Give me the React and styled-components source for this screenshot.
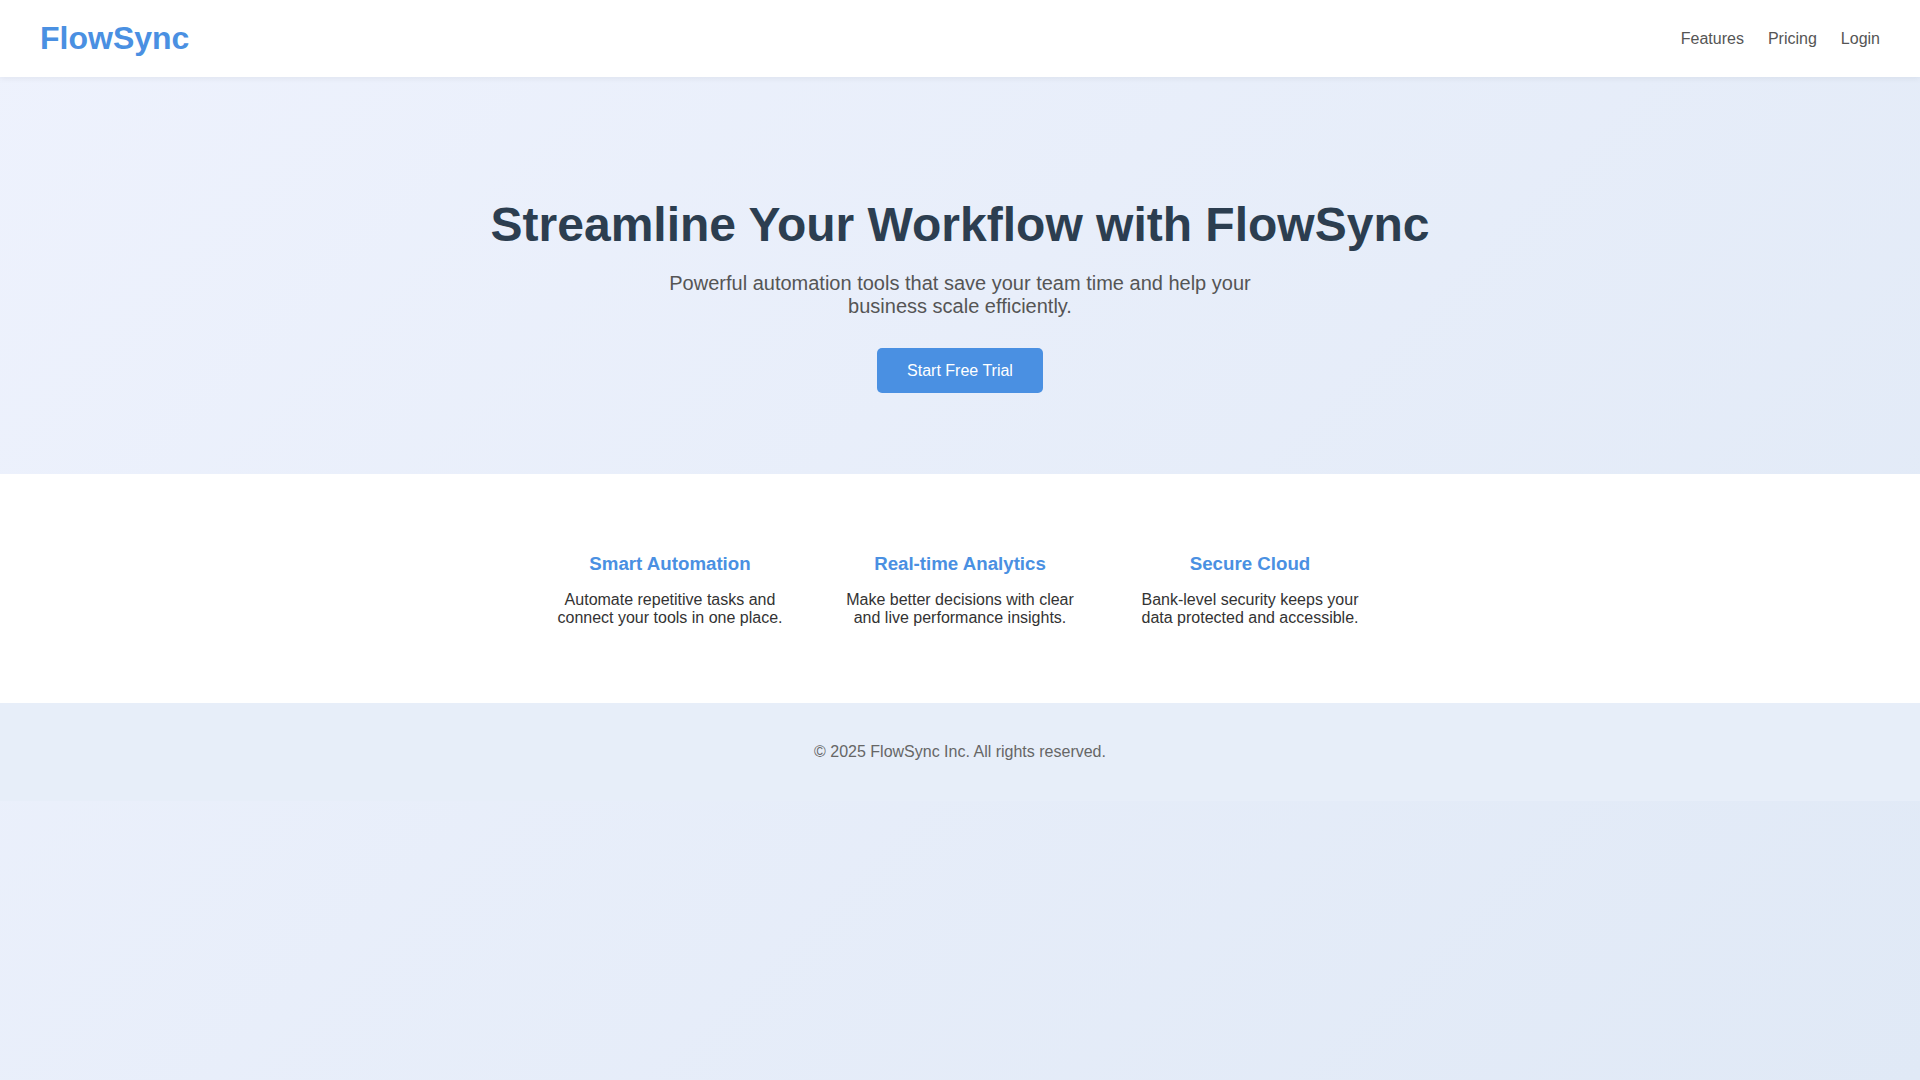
import React from "react";
import styled, { createGlobalStyle } from "styled-components";

const GlobalStyle = createGlobalStyle`
  * { box-sizing: border-box; }
  html, body { margin: 0; padding: 0; }
  body {
    min-height: 100vh;
    font-family: "Liberation Sans", Arial, sans-serif;
    background: linear-gradient(135deg, #eef2fd 0%, #e0e9f6 100%);
    color: #333;
  }
`;

const Header = styled.header`
  display: flex;
  align-items: center;
  justify-content: space-between;
  padding: 20px 40px;
  background: #ffffff;
  box-shadow: 0 2px 6px rgba(0, 0, 0, 0.05);
  position: relative;
  z-index: 1;
`;

const Logo = styled.div`
  font-size: 32px;
  font-weight: 700;
  color: #4a90e2;
`;

const Nav = styled.nav`
  display: flex;
  gap: 24px;
`;

const NavLink = styled.a`
  font-size: 16px;
  color: #555;
  text-decoration: none;
  cursor: pointer;
`;

const Hero = styled.section`
  display: flex;
  flex-direction: column;
  align-items: center;
  text-align: center;
  padding: 120px 32px 81px;
`;

const Title = styled.h1`
  margin: 0 0 20px;
  font-size: 48px;
  font-weight: 700;
  color: #2c3e50;
`;

const Subtitle = styled.p`
  margin: 0 0 30px;
  max-width: 600px;
  font-size: 20px;
  color: #555;
`;

const CTA = styled.button`
  font-family: inherit;
  font-size: 16px;
  line-height: 19px;
  color: #fff;
  background: #4a90e2;
  border: none;
  border-radius: 5px;
  padding: 13px 30px;
  cursor: pointer;
`;

const Features = styled.section`
  background: #ffffff;
  padding: 79px 32px 76px;
  display: grid;
  grid-template-columns: repeat(3, 250px);
  justify-content: center;
  column-gap: 40px;
`;

const Feature = styled.div`
  text-align: center;
`;

const FeatureTitle = styled.h3`
  margin: 0 0 16px;
  font-size: 18.7px;
  font-weight: 700;
  color: #4a90e2;
`;

const FeatureText = styled.p`
  margin: 0;
  font-size: 16px;
  color: #333;
`;

const Footer = styled.footer`
  background: #e7eef9;
  padding: 40px 32px;
  text-align: center;
  font-size: 16px;
  color: #666;
`;

const features = [
  {
    title: "Smart Automation",
    text: "Automate repetitive tasks and connect your tools in one place.",
  },
  {
    title: "Real-time Analytics",
    text: "Make better decisions with clear and live performance insights.",
  },
  {
    title: "Secure Cloud",
    text: "Bank-level security keeps your data protected and accessible.",
  },
];

export default function App() {
  return (
    <>
      <GlobalStyle />
      <Header>
        <Logo>FlowSync</Logo>
        <Nav>
          <NavLink>Features</NavLink>
          <NavLink>Pricing</NavLink>
          <NavLink>Login</NavLink>
        </Nav>
      </Header>
      <Hero>
        <Title>Streamline Your Workflow with FlowSync</Title>
        <Subtitle>
          Powerful automation tools that save your team time and help your
          business scale efficiently.
        </Subtitle>
        <CTA>Start Free Trial</CTA>
      </Hero>
      <Features>
        {features.map((f) => (
          <Feature key={f.title}>
            <FeatureTitle>{f.title}</FeatureTitle>
            <FeatureText>{f.text}</FeatureText>
          </Feature>
        ))}
      </Features>
      <Footer>© 2025 FlowSync Inc. All rights reserved.</Footer>
    </>
  );
}
